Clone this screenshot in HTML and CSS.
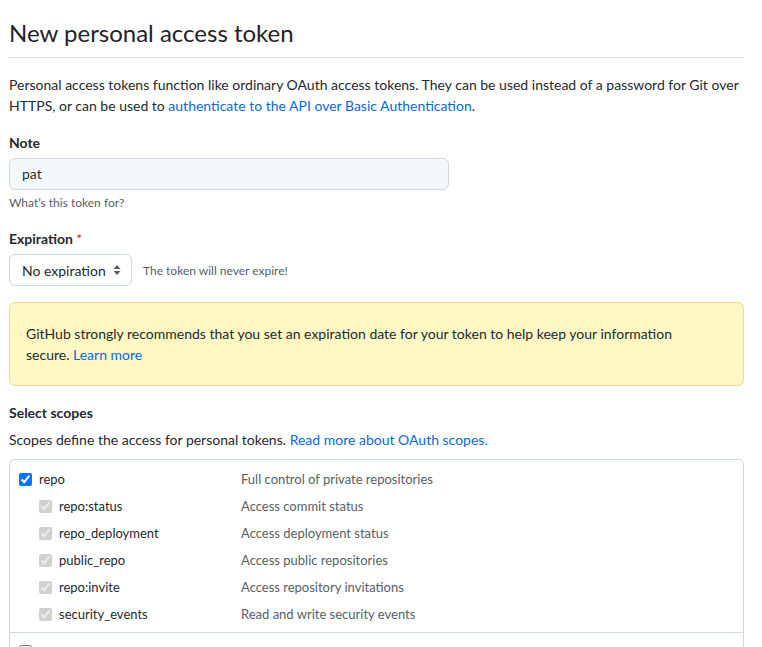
FILE: index.html
```html
<!DOCTYPE html>
<html lang="en">
<head>
<meta charset="utf-8">
<title>New personal access token</title>
<link rel="stylesheet" href="styles.css">
</head>
<body>
<main class="page">
  <div class="subhead">
    <h1 class="subhead-heading">New personal access token</h1>
  </div>

  <p class="intro">Personal access tokens function like ordinary OAuth access tokens. They can be used instead of a password for Git over HTTPS, or can be used to <a href="#">authenticate to the API over Basic Authentication</a>.</p>

  <div class="form-group">
    <label class="form-label" for="note">Note</label>
    <div class="input">pat</div>
    <p class="note">What’s this token for?</p>
  </div>

  <div class="form-group">
    <label class="form-label">Expiration <span class="required">*</span></label>
    <div class="expiry-row">
      <div class="select">
        <span>No expiration</span>
        <svg class="select-arrows" width="8" height="12" viewBox="0 0 8 12" aria-hidden="true">
          <path d="M4 1 L7.5 5 H0.5 Z M4 11 L0.5 7 H7.5 Z" fill="#57606a"/>
        </svg>
      </div>
      <span class="expiry-note">The token will never expire!</span>
    </div>
  </div>

  <div class="flash">
    GitHub strongly recommends that you set an expiration date for your token to help keep your information secure. <a href="#">Learn more</a>
  </div>

  <div class="scopes-head">
    <div class="form-label">Select scopes</div>
    <p class="scopes-desc">Scopes define the access for personal tokens. <a href="#">Read more about OAuth scopes.</a></p>
  </div>

  <div class="scopes">
    <div class="scope-group">
      <div class="scope-row">
        <div class="scope-name"><input type="checkbox" checked><span>repo</span></div>
        <div class="scope-desc">Full control of private repositories</div>
      </div>
      <div class="scope-row sub">
        <div class="scope-name"><input type="checkbox" checked disabled><span>repo:status</span></div>
        <div class="scope-desc">Access commit status</div>
      </div>
      <div class="scope-row sub">
        <div class="scope-name"><input type="checkbox" checked disabled><span>repo_deployment</span></div>
        <div class="scope-desc">Access deployment status</div>
      </div>
      <div class="scope-row sub">
        <div class="scope-name"><input type="checkbox" checked disabled><span>public_repo</span></div>
        <div class="scope-desc">Access public repositories</div>
      </div>
      <div class="scope-row sub">
        <div class="scope-name"><input type="checkbox" checked disabled><span>repo:invite</span></div>
        <div class="scope-desc">Access repository invitations</div>
      </div>
      <div class="scope-row sub">
        <div class="scope-name"><input type="checkbox" checked disabled><span>security_events</span></div>
        <div class="scope-desc">Read and write security events</div>
      </div>
    </div>
    <div class="scope-group next">
      <div class="scope-row">
        <div class="scope-name"><input type="checkbox" aria-label="workflow"></div>
      </div>
    </div>
  </div>
</main>
</body>
</html>
```
FILE: styles.css
```css
* { box-sizing: border-box; }

html, body {
  margin: 0;
  padding: 0;
  background: #ffffff;
}

body {
  font-family: "Lato", "Liberation Sans", sans-serif;
  font-size: 14px;
  line-height: 21px;
  color: #24292f;
}

a {
  color: #0969da;
  text-decoration: none;
}

p { margin: 0; }

.page {
  padding: 15px 18px 0 9px;
}

.subhead {
  border-bottom: 1px solid #d8dee4;
  padding-bottom: 6px;
}

.subhead-heading {
  margin: 0;
  font-size: 24px;
  line-height: 36px;
  font-weight: 400;
  color: #1f2328;
}

.intro {
  margin-top: 16px;
}

.form-group {
  margin-top: 16px;
}

.form-label {
  display: block;
  font-weight: 700;
  color: #24292f;
}

.required {
  color: #cf222e;
  font-weight: 400;
}

.input {
  margin-top: 5px;
  width: 440px;
  height: 32px;
  padding: 0 12px;
  border: 1px solid #d0d7de;
  border-radius: 6px;
  background: #f5f8fb;
  line-height: 30px;
  color: #24292f;
}

.note {
  margin-top: 4px;
  font-size: 12px;
  line-height: 18px;
  color: #57606a;
}

.expiry-row {
  margin-top: 5px;
  display: flex;
  align-items: center;
  gap: 11px;
}

.select {
  width: 123px;
  height: 32px;
  padding: 0 10px 0 12px;
  border: 1px solid #d0d7de;
  border-radius: 6px;
  background: #ffffff;
  display: flex;
  align-items: center;
  justify-content: space-between;
  color: #24292f;
}

.select-arrows {
  display: block;
}

.expiry-note {
  font-size: 12px;
  color: #57606a;
}

.flash {
  margin-top: 16px;
  padding: 20px 56px 20px 16px;
  background: #fff8c5;
  border: 1px solid #f0dc94;
  border-radius: 6px;
  color: #24292f;
}

.scopes-head {
  margin-top: 16px;
}

.scopes-desc {
  margin-top: 6px;
}

.scopes {
  margin-top: 9px;
  border: 1px solid #d0d7de;
  border-radius: 6px;
  font-size: 13px;
}

.scope-group {
  padding: 6px 0 4px;
}

.scope-group + .scope-group {
  border-top: 1px solid #d0d7de;
}

.scope-group.next {
  padding-top: 5px;
}

.scope-row {
  display: flex;
  align-items: center;
  height: 27px;
  padding-left: 9px;
}

.scope-name {
  width: 222px;
  flex: none;
  display: flex;
  align-items: center;
  color: #24292f;
}

.scope-row.sub .scope-name {
  padding-left: 20px;
}

.scope-name input {
  margin: 0 7px 0 0;
  width: 13px;
  height: 13px;
}

.scope-desc {
  color: #57606a;
}
```
